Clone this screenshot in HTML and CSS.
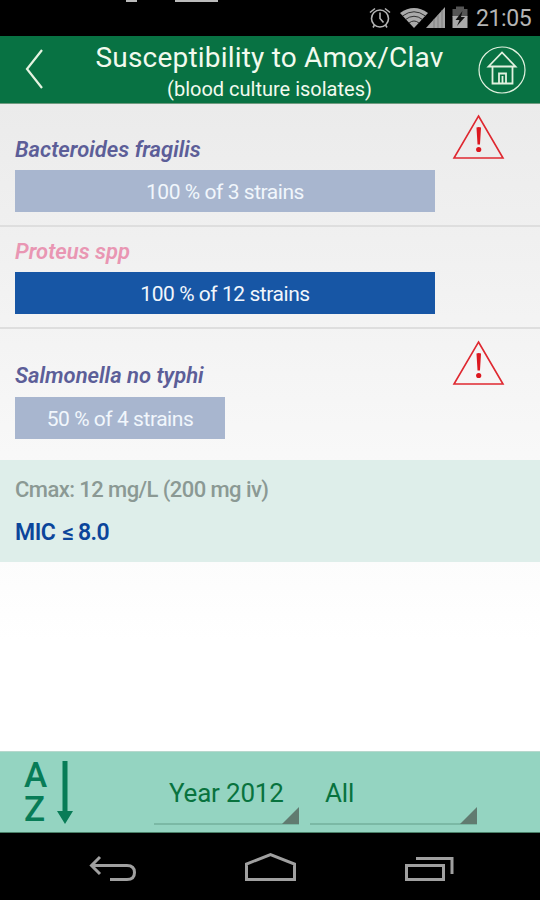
FILE: index.html
```html
<!DOCTYPE html>
<html lang="en">
<head>
<meta charset="utf-8">
<title>Susceptibility</title>
<link rel="stylesheet" href="styles.css">
</head>
<body>
<div class="screen">
  <div class="status">
    <div class="notices"><i class="notice-a"></i><i class="notice-b"></i></div>
    <svg class="status-icons" width="102" height="36" viewBox="0 0 102 36">
      <g fill="none" stroke="#b4b4b4" stroke-width="1.6">
        <circle cx="12" cy="18.500" r="8.500"/>
        <path d="M12 12.500V18.500L15.500 22.500M2 12.500L7 8.500M17 8.500L22 12.500M6.500 25L5 27.500M17.500 25L19 27.500"/>
      </g>
      <path fill="#aaa" d="M32 13Q46 3 60 13L46 28Z"/>
      <g fill="none" stroke="#222" stroke-width=".9"><path d="M34.500 16Q46 7.500 57.500 16M37.500 19.500Q46 13 54.500 19.500M41 23Q46 19 51 23"/></g>
      <path fill="#a3a3a3" d="M58 28L77 7V28Z"/>
      <path stroke="#777" stroke-width=".8" d="M66 19V28M70 15V28M74 10V28"/>
      <path fill="#555" d="M84.500 9H88V6.500H96V9H99.500V17H84.500Z"/>
      <path fill="#aaa" d="M84.500 16H99.500V28H84.500Z"/>
      <path fill="#111" d="M94.500 11L87.500 20H91.500L89 26L97 17H93Z"/>
    </svg>
    <span class="clock">21:05</span>
  </div>
  <header class="header">
    <svg class="back" width="24" height="44" viewBox="0 0 24 44"><path d="M20 3L5 22L20 41"/></svg>
    <div class="titles"><h1>Susceptibility to Amox/Clav</h1><p>(blood culture isolates)</p></div>
    <svg class="home" width="50" height="50" viewBox="0 0 50 50"><circle cx="25" cy="25" r="23"/><path d="M11.500 21.500L25 7.500L38.500 21.500ZM15.500 22V38.500H35.500V22M22 38V28.500H29V38M25.500 31V38"/></svg>
  </header>
  <main class="content">
    <section class="row row-a">
      <h2>Bacteroides fragilis</h2>
      <div class="bar pale">100 % of 3 strains</div>
      <svg class="warning" width="54" height="48" viewBox="0 0 54 48"><path class="tri" d="M27.500 3L52 45H3Z"/><path class="mark" d="M25.500 14.500Q27.700 13.500 30 14.500L29 31.500H26.500Z"/><circle class="mark" cx="27.700" cy="36.500" r="2.600"/></svg>
    </section>
    <section class="row row-b">
      <h2 class="pink">Proteus spp</h2>
      <div class="bar strong">100 % of 12 strains</div>
    </section>
    <section class="row row-c">
      <h2>Salmonella no typhi</h2>
      <div class="bar pale half">50 % of 4 strains</div>
      <svg class="warning" width="54" height="48" viewBox="0 0 54 48"><path class="tri" d="M27.500 3L52 45H3Z"/><path class="mark" d="M25.500 14.500Q27.700 13.500 30 14.500L29 31.500H26.500Z"/><circle class="mark" cx="27.700" cy="36.500" r="2.600"/></svg>
    </section>
    <section class="info"><p class="cmax">Cmax: 12 mg/L (200 mg iv)</p><p class="mic">MIC <span class="le">≤</span> 8.0</p></section>
  </main>
  <footer class="filters">
    <div class="sort"><div class="letters"><span>A</span><span>Z</span></div>
      <svg width="18" height="66" viewBox="0 0 18 66"><path fill="#087c57" d="M6.500 2H11.500V52H17L9 65L1 52H6.500Z"/></svg></div>
    <div class="select year">Year 2012</div>
    <div class="select all">All</div>
  </footer>
  <nav class="nav">
    <svg width="540" height="67" viewBox="0 0 540 67"><path d="M100 24L91.500 32.500L100 41M92 32.500H127Q134.500 32.500 134.500 39.500Q134.500 46.500 127 46.500H110M246.500 46.500V31L270.500 21.500L294.500 31V46.500ZM406.500 32.500H443.500V46.500H406.500ZM416 25.500H452V41"/></svg>
  </nav>
</div>
</body>
</html>
```
FILE: styles.css
```css
* { box-sizing: border-box; }
body { margin: 0; font-family: Roboto, sans-serif; }
h1, h2, p { margin: 0; }
svg { display: block; flex: none; }
.screen { width: 540px; height: 900px; display: flex; flex-direction: column; overflow: hidden; background: #fff; }
.status { height: 36px; flex: none; background: #000; display: flex; }
.notices { width: 368px; display: flex; gap: 38px; padding-left: 126px; }
.notices i { height: 2px; background: #bbb; }
.notice-a { width: 11px; }
.notice-b { width: 43px; }
.clock { color: #b5b5b5; font-size: 23px; line-height: 38px; margin-left: 6px; letter-spacing: -.4px; }
.header { height: 68px; flex: none; background: #087243; border-bottom: 1px solid #709b80; display: flex; color: #f2faee; }
.back { margin: 11px 0 0 22px; fill: none; stroke: #e5f3e1; stroke-width: 2.2; }
.titles { flex: 1; text-align: center; padding: 4px 0 0 16px; white-space: nowrap; }
.titles h1 { font-size: 28px; font-weight: 400; line-height: 36px; letter-spacing: .2px; }
.titles p { font-size: 20px; line-height: 27px; font-weight: 400; }
.home { margin: 9px 13px 0 0; fill: none; stroke: #e1f1df; stroke-width: 1.8; }
.home circle { stroke-width: 1.2; }
.content { height: 647px; flex: none; background: linear-gradient(#ebebeb, #fff 83%, #fff); }
.row { position: relative; border-bottom: 2px solid #dedede; padding-left: 15px; }
.row-a { height: 123px; padding-top: 30px; }
.row-b { height: 102px; padding-top: 9px; }
.row-c { height: 131px; padding-top: 32px; border: 0; }
h2 { font-size: 22px; line-height: 31px; height: 36px; font-weight: 600; font-style: italic; color: #5c5e98; }
.row-c h2 { line-height: 30px; }
.pink { color: #e996b3; }
.bar { width: 420px; height: 42px; text-align: center; font-size: 21px; line-height: 44px; letter-spacing: -.45px; color: #f1f6fc; }
.pale { background: #a8b6cf; }
.strong { background: #1756a5; }
.half { width: 210px; }
.warning { position: absolute; left: 451px; top: 9px; }
.row-c .warning { top: 10px; }
.tri { fill: none; stroke: #df2830; stroke-width: 1.6; }
.mark { fill: #dc1820; }
.info { height: 102px; background: #deeeea; padding: 14px 0 0 15px; }
.cmax { color: #8b9994; font-size: 22px; line-height: 31px; font-weight: 500; letter-spacing: -.57px; }
.mic { color: #0b459b; font-size: 23px; line-height: 30px; font-weight: 600; margin-top: 13px; letter-spacing: -.5px; }
.le { font-size: 23px; margin: 0 -1px 0 2px; }
.filters { height: 82px; flex: none; background: #94d4c1; border-top: 1px solid #b7d8cd; border-bottom: 1px solid #4a8068; display: flex; }
.sort { width: 154px; display: flex; padding: 7px 0 0 24px; color: #087c57; }
.letters { width: 32px; display: flex; flex-direction: column; font-size: 35px; font-weight: 500; line-height: 34px; }
.select { position: relative; height: 73px; border-bottom: 2px solid #7bb9a5; color: #08733e; font-size: 26px; line-height: 83px; letter-spacing: -.2px; }
.year { width: 145px; padding-left: 15px; }
.all { width: 167px; padding-left: 15px; margin-left: 11px; }
.select::after { content: ""; position: absolute; right: 0; bottom: -1px; width: 17px; height: 17px; background: #617b70; clip-path: polygon(100% 0, 100% 100%, 0 100%); }
.nav { height: 67px; flex: none; background: #000; }
.nav path { fill: none; stroke: #a0a0a0; stroke-width: 3; }
```
